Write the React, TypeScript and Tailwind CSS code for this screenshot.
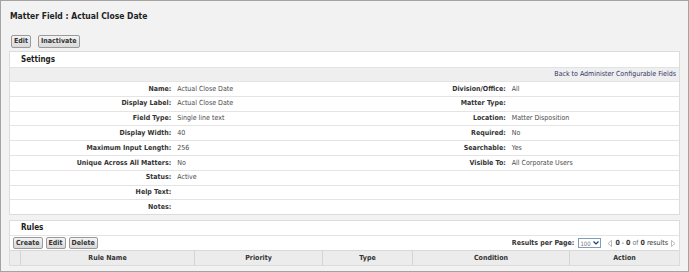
import React from "react";

const font = "font-['DejaVu_Sans_Condensed','DejaVu_Sans',sans-serif]";

function Btn({ children, className = "" }: { children: React.ReactNode; className?: string }) {
  return (
    <div
      className={`flex h-[12px] items-center rounded-[2px] border border-[#9a9a9a] bg-gradient-to-b from-[#f4f4f4] to-[#d9d9d9] px-[2px] text-[7px] font-bold leading-none text-[#333] ${className}`}
    >
      {children}
    </div>
  );
}

const rows: [string, string, string, string][] = [
  ["Name:", "Actual Close Date", "Division/Office:", "All"],
  ["Display Label:", "Actual Close Date", "Matter Type:", ""],
  ["Field Type:", "Single line text", "Location:", "Matter Disposition"],
  ["Display Width:", "40", "Required:", "No"],
  ["Maximum Input Length:", "256", "Searchable:", "Yes"],
  ["Unique Across All Matters:", "No", "Visible To:", "All Corporate Users"],
  ["Status:", "Active", "", ""],
  ["Help Text:", "", "", ""],
  ["Notes:", "", "", ""],
];

export default function App() {
  return (
    <div className={`${font} flex h-[272px] w-[689px] flex-col border border-[#a3a3a3] bg-[#f2f2f2] px-[8px]`}>
      <div className="flex h-[29px] items-center pl-[1px] pt-[2px] text-[8.5px] font-bold text-[#222]">
        Matter Field : Actual Close Date
      </div>
      <div className="flex h-[21px] items-center gap-[7px] pl-[2px] pt-[2px]">
        <Btn className="h-[13px]">Edit</Btn>
        <Btn className="h-[13px]">Inactivate</Btn>
      </div>
      <div className="flex flex-col border border-[#dcdcdc] bg-white">
        <div className="flex h-[15px] items-center pl-[11px] text-[8px] font-bold text-[#222]">Settings</div>
        <div className="flex h-[14px] items-center justify-end border-t border-[#e2e2e2] bg-[#efefef] pr-[3px] text-[7px] text-[#34346e]">
          Back to Administer Configurable Fields
        </div>
        {rows.map((r, i) => (
          <div key={i} className="grid h-[14.8px] grid-cols-4 items-center border-t border-[#e4e4e4] text-[7px] text-[#333]">
            <div className="pr-[6px] text-right font-bold">{r[0]}</div>
            <div className="text-[#4a4a4a]">{r[1]}</div>
            <div className="pr-[6px] text-right font-bold">{r[2]}</div>
            <div className="text-[#4a4a4a]">{r[3]}</div>
          </div>
        ))}
      </div>
      <div className="mt-[5px] flex flex-col border border-[#dcdcdc] bg-white">
        <div className="flex h-[14px] items-center pl-[11px] text-[8px] font-bold text-[#222]">Rules</div>
        <div className="flex h-[15px] items-center border-t border-[#e4e4e4] pl-[3px] pr-[3px]">
          <div className="flex gap-[3px]">
            <Btn>Create</Btn>
            <Btn>Edit</Btn>
            <Btn>Delete</Btn>
          </div>
          <div className="ml-auto flex items-center text-[7px] text-[#333]">
            <span className="font-bold">Results per Page:</span>
            <div className="ml-[4px] flex h-[10px] w-[23px] items-center justify-between border border-[#7f9db9] bg-white px-[1px] text-[6px] text-[#777]">
              <span>100</span>
              <svg width="6" height="4" viewBox="0 0 6 4">
                <path d="M0.5 0.5 L3 3 L5.5 0.5" fill="none" stroke="#1c3a78" strokeWidth="1.2" />
              </svg>
            </div>
            <svg className="ml-[6px]" width="5" height="7" viewBox="0 0 5 7">
              <path d="M4.5 0.5 L1 3.5 L4.5 6.5 Z" fill="none" stroke="#aaa" strokeWidth="0.8" />
            </svg>
            <span className="ml-[3px] font-bold">0</span>
            <span className="mx-[2px]">-</span>
            <span className="font-bold">0</span>
            <span className="mx-[2px] text-[#777]">of</span>
            <span className="font-bold">0</span>
            <span className="ml-[2px]">results</span>
            <svg className="ml-[3px]" width="5" height="7" viewBox="0 0 5 7">
              <path d="M0.5 0.5 L4 3.5 L0.5 6.5 Z" fill="none" stroke="#aaa" strokeWidth="0.8" />
            </svg>
          </div>
        </div>
        <div className="flex h-[15px] border-t border-[#d8d8d8] bg-[#ececec] text-[7px] font-bold text-[#333]">
          <div className="w-[11px] border-r border-[#d4d4d4]" />
          <div className="flex w-[174px] items-center justify-center border-r border-[#d4d4d4]">Rule Name</div>
          <div className="flex w-[128px] items-center justify-center border-r border-[#d4d4d4]">Priority</div>
          <div className="flex w-[90px] items-center justify-center border-r border-[#d4d4d4]">Type</div>
          <div className="flex w-[157px] items-center justify-center border-r border-[#d4d4d4]">Condition</div>
          <div className="flex flex-1 items-center justify-center">Action</div>
        </div>
      </div>
    </div>
  );
}
